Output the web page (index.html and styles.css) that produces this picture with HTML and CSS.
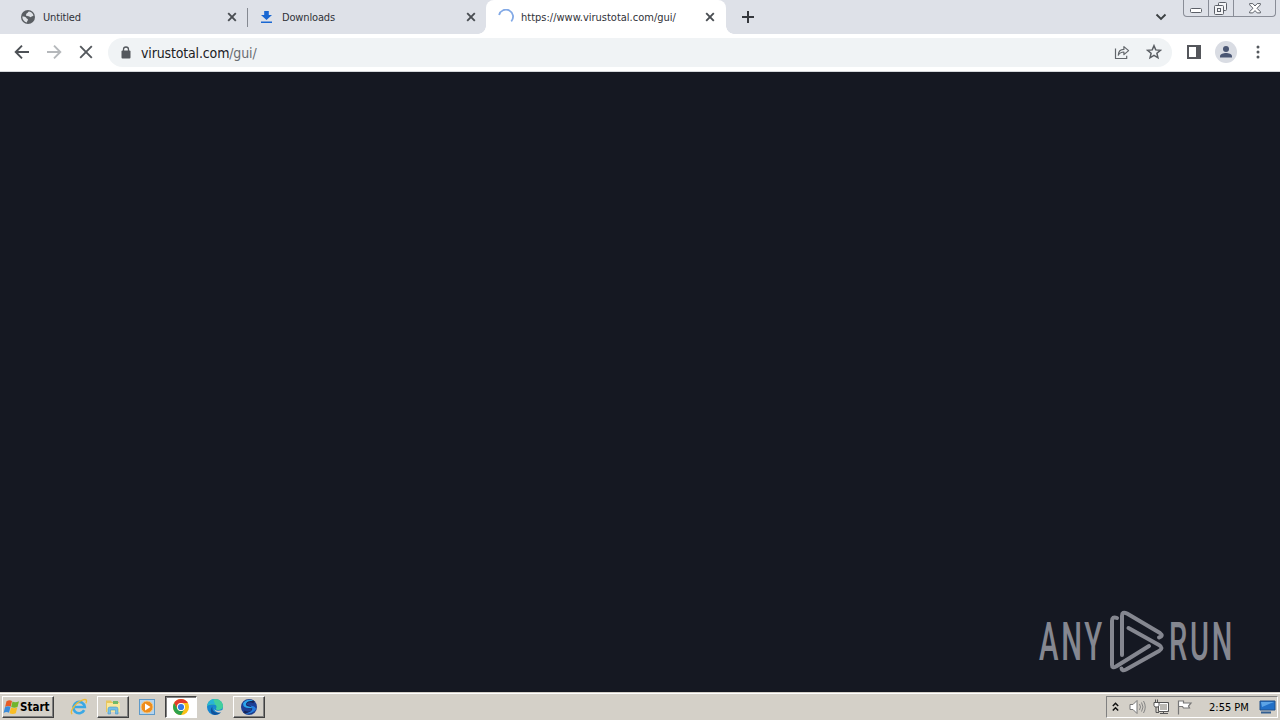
FILE: index.html
```html
<!DOCTYPE html>
<html lang="en">
<head>
	<meta charset="utf-8">
	<title>virustotal.com</title>
	<link rel="stylesheet" href="styles.css">
</head>
<body>
	<div class="tabs">
		<div class="tab first">
			<svg class="icon" width="16" height="16" viewBox="0 0 16 16"><circle cx="8" cy="8" r="7" fill="#5a5e63"/><path d="M2.300 7.400c1.600 0 3.600.1 4.100 1.500.2.900 1.500.7 1.600 1.700.1 1.100-1 1.200-1.100 2.900C4 12.800 2.200 10.300 2.300 7.400zM6.800 4.300c1-.1 1.100-1.600 2.300-1.800 2 .4 3.800 1.900 4.400 4-.8.900-1.700.5-2.200 1.300-.7.900-1.700 0-2.500-.5-.9-.4-2.200.2-2.600-.8-.3-1 .1-1.600.6-2.200z" fill="#dee1e6"/></svg>
			<span class="name untitled">Untitled</span>
			<svg class="close" width="10" height="10" viewBox="0 0 10 10"><path d="M1.200 1.200l7.600 7.600M8.800 1.200L1.200 8.800"/></svg>
		</div>
		<div class="tab second">
			<svg class="icon" width="16" height="16" viewBox="0 0 16 16"><path d="M5.200 2h4.600v4H13L7.500 11 2 6h3.200zM2 12.600h11V14H2z" fill="#1967d2"/></svg>
			<span class="name downloads">Downloads</span>
			<svg class="close" width="10" height="10" viewBox="0 0 10 10"><path d="M1.200 1.200l7.600 7.600M8.800 1.200L1.200 8.800"/></svg>
		</div>
		<div class="tab active">
			<svg class="icon" width="16" height="16" viewBox="0 0 16 16"><path d="M1.100 5.900a7.100 7.100 0 1 1 12.200 6.500" fill="none" stroke="#82a9e6" stroke-width="1.800"/></svg>
			<span class="name url">https://www.virustotal.com/gui/</span>
			<svg class="close" width="10" height="10" viewBox="0 0 10 10"><path d="M1.200 1.200l7.600 7.600M8.800 1.200L1.200 8.800"/></svg>
		</div>
		<svg class="plus" width="12" height="12" viewBox="0 0 12 12"><path d="M6 0v12M0 6h12" stroke="#35383d" stroke-width="2"/></svg>
		<svg class="down" width="12" height="8" viewBox="0 0 12 8"><path d="M1.500 1.500L6 6l4.500-4.500" fill="none" stroke="#3c4043" stroke-width="1.900"/></svg>
		<div class="win">
			<span class="min"><svg width="13" height="6" viewBox="0 0 13 6"><rect x=".5" y=".5" width="11" height="4" rx="1" fill="#fff" stroke="#5c6068"/></svg></span>
			<span class="max"><svg width="14" height="14" viewBox="0 0 14 14"><g fill="#f4f5f7" stroke="#5c6068"><rect x="4.500" y=".5" width="8" height="8" rx="1"/><rect x=".5" y="3.500" width="9" height="9" rx="1"/><rect x="3.500" y="6.500" width="3" height="3"/></g></svg></span>
			<span class="x"><svg width="12" height="11" viewBox="0 0 12 11"><path d="M.6.600h3.200L6 3l2.200-2.400h3.200v1.200L8 5.300l3.400 3.400v1.200H8.200L6 7.600 3.800 9.900H.6V8.700L4 5.300.6 1.800z" fill="#fff" stroke="#5c6068"/></svg></span>
		</div>
	</div>

	<div class="toolbar">
		<svg class="nav" width="32" height="32" viewBox="0 0 32 32"><path d="M23 16H10M16 9.700L9.700 16l6.300 6.300" stroke="#4d5156"/></svg>
		<svg class="nav" width="32" height="32" viewBox="0 0 32 32"><path d="M9 16h13M16 9.700l6.300 6.300-6.300 6.300" stroke="#b5b8bb"/></svg>
		<svg class="nav" width="32" height="32" viewBox="0 0 32 32"><path d="M10.200 10.200l11.600 11.600M21.800 10.200L10.200 21.800" stroke="#54585d"/></svg>
		<div class="address">
			<svg class="lock" width="10" height="13" viewBox="0 0 10 13"><path d="M2.500 5V3.500a2.500 2.500 0 0 1 5 0V5" fill="none" stroke="#54585d" stroke-width="1.300"/><rect x=".5" y="4.500" width="9" height="8" rx="1" fill="#54585d"/></svg>
			<span class="host">virustotal.com</span><span class="path">/gui/</span>
			<svg class="share" width="16" height="16" viewBox="0 0 16 16"><path d="M1.500 4.500v10h11.200v-2.700M4.300 11.200c.2-3.800 2.300-5.800 5.600-5.800V2.600l4.700 4-4.700 4V8c-2.700 0-4.400 1-5.600 3.200z" fill="none" stroke="#62666b" stroke-width="1.200" stroke-linejoin="round"/></svg>
			<svg class="star" width="16" height="16" viewBox="0 0 16 16"><path d="M8 1.700l1.750 4.200 4.650.4-3.500 3 1.050 4.500L8 11.400l-3.950 2.400 1.050-4.500-3.500-3 4.650-.4z" fill="none" stroke="#5a5e63" stroke-width="1.500"/></svg>
		</div>
		<svg class="panel" width="14" height="14" viewBox="0 0 14 14"><path d="M0 0h14v14H0zM2 2v10h7V2z" fill="#54565b" fill-rule="evenodd"/></svg>
		<svg class="user" width="22" height="22" viewBox="0 0 22 22"><circle cx="11" cy="11" r="11" fill="#d9dce3"/><circle cx="11" cy="8" r="3" fill="#4a5673"/><path d="M5 16.500v-1.300c0-2.200 3.500-3.200 6-3.200s6 1 6 3.200v1.300z" fill="#4a5673"/></svg>
		<svg class="more" width="4" height="14" viewBox="0 0 4 14"><g fill="#54585d"><circle cx="2" cy="2" r="1.500"/><circle cx="2" cy="7" r="1.500"/><circle cx="2" cy="12" r="1.500"/></g></svg>
	</div>

	<div class="page">
		<svg class="logo" width="210" height="70" viewBox="0 0 210 70">
			<text x="3" y="54" textLength="66" lengthAdjust="spacingAndGlyphs">ANY</text>
			<text x="133" y="54" textLength="66" lengthAdjust="spacingAndGlyphs">RUN</text>
			<path d="M81 12Q76 10 76 15v44q0 3.500 4 1.500L113 40M86 49V10q0-5 5-2.500L124 27q4 3 -1 4.500M92.500 22L123 39q5 3 0 6L90 63.500q-4 2-4.500-1"/>
		</svg>
	</div>

	<div class="taskbar">
		<div class="start">
			<svg width="18" height="17" viewBox="0 0 18 17"><path d="M3.500 2.200c2-1.200 4-1.200 5.500-.1L7.700 7.700C6 6.700 4.200 6.700 2.100 7.900z" fill="#e65b25"/><path d="M9.500 2.500c2 1 4 .9 6.500-.3l-1.500 5.800c-2 1-4.300 1-6.300 0z" fill="#72b52d"/><path d="M2 8.300c2-1.200 3.900-1.200 5.500-.2L6 13.700c-1.700-1-3.600-.9-5.400.2z" fill="#398bda"/><path d="M8 8.500c2 1 4.300 1 6.300 0l-1.500 5.800c-2 1.100-4.300 1-6.300 0z" fill="#f9bd24"/></svg>
			<span>Start</span>
		</div>
		<div class="task ie"><svg width="18" height="18" viewBox="0 0 18 18"><path d="M14.200 12.200a5.700 5.700 0 1 1 .6-3.200H5" fill="none" stroke="#3aa8e5" stroke-width="2.600"/><path d="M2.200 16.200C-1.300 14 5.800 4.200 13 1.800c3.500-1.100 4.200.5 3 3.500" fill="none" stroke="#eebb35" stroke-width="1.400"/></svg></div>
		<div class="task raised"><svg width="18" height="18" viewBox="0 0 18 18"><path d="M2 2.500h5l1 1.500h7v10H2z" fill="#e8c65c"/><path d="M3 5h13v9H3z" fill="#f9e89d"/><path d="M9 3h5v3H9z" fill="#71b969"/><path d="M4 16v-5q0-2 2-2h6q2 0 2 2v5h-2.500v-4h-5v4z" fill="#76bfe6" stroke="#4c99c8" stroke-width=".6"/></svg></div>
		<div class="task media"><svg width="18" height="18" viewBox="0 0 18 18"><rect x="1.500" y="1.500" width="15" height="15" fill="#b4d4ef" stroke="#5e9ac9"/><circle cx="9" cy="9" r="6" fill="#ee8d1c" stroke="#f9c77b"/><path d="M7 5.500v7l5.500-3.500z" fill="#fff"/></svg></div>
		<div class="task pressed"><svg width="18" height="18" viewBox="0 0 18 18"><circle cx="9" cy="9" r="8" fill="#fbc116"/><path d="M2.100 5A8 8 0 0 1 15.900 5H9a4 4 0 0 0-3.500 6z" fill="#e33b2e"/><path d="M2.100 5A8 8 0 0 0 9 17l3.500-6a4 4 0 0 1-7 0z" fill="#2da24c"/><circle cx="9" cy="9" r="4" fill="#fff"/><circle cx="9" cy="9" r="3.100" fill="#3478e5"/></svg></div>
		<div class="task edge"><svg width="18" height="18" viewBox="0 0 18 18"><circle cx="9" cy="9" r="8" fill="#1786d0"/><path d="M1.200 8C2 3.500 5 1 9 1c5 0 8 3.500 8 7 0 3-2.500 4-5 4-2 0-2.500-1-1.700-2 .8-1.300 0-3.500-2.600-3.500C5 6.500 2.500 6.500 1.200 8z" fill="#42cf9d"/><path d="M1.200 8C2 3.500 5 1 9 1 6 2 9 4 9 6.500 6 5.500 3 6 1.200 8z" fill="#28b4d6"/><path d="M6.500 8.500c-1.200 4 2.500 7.500 8.500 5.700A8 8 0 0 1 9 17c-4.500-.5-5.500-5.500-2.500-8.500z" fill="#11529c"/><path d="M8 9c-.7 3 3.500 5 8.500 3l1.500-1v5l-3-1.500c-4 .5-7-1-7-5.500z" fill="#d4d0c8"/></svg></div>
		<div class="task raised"><svg width="18" height="18" viewBox="0 0 18 18"><circle cx="9" cy="9" r="8" fill="#1d3f95"/><path d="M14 4.200C11 2 5 3 5 6.300 5 10 13 8 13 11.800c0 3-5.500 3.700-9 1.800" fill="none" stroke="#172558" stroke-width="2.500"/><path d="M3 5.500C5 1.500 10 .5 13.500 3 9 2.500 5.500 4 6 7c.5 1.500 5 1.500 7 3-3 .5-8 0-9.500-2z" fill="#2ba6ee"/><path d="M5 15.500c4 1 9-.5 11-4.500-.5-3-4-3-6-3.500 5 3.500 1 7-5 8z" fill="#257de0"/></svg></div>
		<div class="tray">
			<svg class="up" width="7" height="10" viewBox="0 0 7 10"><path d="M.8 4L3.500 1.300 6.200 4M.8 8.500l2.700-2.700 2.700 2.700" fill="none" stroke="#111" stroke-width="1.500"/></svg>
			<svg class="sound" width="17" height="16" viewBox="0 0 17 16"><path d="M1 5.500h3l4-4v13l-4-4H1z" fill="#fff" stroke="#777"/><path d="M10.500 5q2 3 0 6M12.500 3.500q3 4.500 0 9M14.500 2q3.500 6 0 12" fill="none" stroke="#858585"/></svg>
			<svg class="net" width="17" height="16" viewBox="0 0 17 16"><path d="M5.500 3.500h10v9h-10z" fill="#bbb9b4" stroke="#555"/><path d="M6.500 4.500h8v7h-8z" fill="none" stroke="#fff"/><path d="M7 14.500h8M10.500 13v2M3 7v6.500h3" fill="none" stroke="#555"/><path d="M1 3.500h5v3l-1 1.500H2L1 6.500zM2.500.5V4M4.500.5V4" fill="#fff" stroke="#555"/></svg>
			<svg class="flag" width="17" height="16" viewBox="0 0 17 16"><path d="M2.500 15.500v-14M2.500 2h5v2h7.500l-2.500 3 1 2h-6l-1-1.500h-4z" fill="#fff" stroke="#777" stroke-width="1.200"/></svg>
			<span class="time">2:55 PM</span>
			<svg class="screen" width="17" height="14" viewBox="0 0 17 14"><path d="M1 1h15v9H1z" fill="#2270c7" stroke="#20518a"/><path d="M2 2h13L3 7z" fill="#5ca4e6"/><path d="M2 12.500h10" stroke="#335f91" stroke-width="2"/></svg>
		</div>
	</div>
</body>
</html>
```

FILE: styles.css
```css
*{
	box-sizing: border-box;
}
body{
	margin: 0;
	width: 1280px;
	height: 720px;
	overflow: hidden;
	display: flex;
	flex-direction: column;
	font-family: "DejaVu Sans Condensed", "DejaVu Sans", sans-serif;
	font-stretch: condensed;
	font-size: 11px;
	color: #303238;
}
svg{
	display: block;
	flex: none;
}
.tabs{
	height: 34px;
	flex: none;
	display: flex;
	padding-left: 8px;
	background-color: #dee1e8;
}
.tab{
	width: 239px;
	height: 34px;
	display: flex;
	align-items: center;
	padding: 0 10px 0 12px;
	position: relative;
}
.tab.first{
	width: 240px;
}
.tab.second{
	padding: 0 11px;
}
.first::after{
	content: "";
	position: absolute;
	right: 0;
	top: 8px;
	width: 1px;
	height: 19px;
	background-color: #858991;
}
.first .close{
	margin-right: 1px;
}
.tab.active{
	width: 240px;
	margin-left: -1px;
	background-color: #fff;
	border-radius: 8px 8px 0 0;
}
.active::before,
.active::after{
	content: "";
	position: absolute;
	bottom: 0;
	width: 8px;
	height: 8px;
}
.active::before{
	left: -8px;
	background: radial-gradient(circle at 0 0, transparent 7.5px, #fff 8px);
}
.active::after{
	right: -8px;
	background: radial-gradient(circle at 100% 0, transparent 7.5px, #fff 8px);
}
.active .close{
	margin-right: 1px;
}
.name{
	flex: 1;
	margin-left: 7px;
	white-space: nowrap;
}
.untitled,
.downloads{
	letter-spacing: -0.15px;
}
.close path{
	stroke: #494d52;
	stroke-width: 1.9;
}
.plus{
	margin: 11px 0 0 16px;
}
.down{
	margin: 13px 16px 0 auto;
}
.win{
	width: 93px;
	height: 17px;
	margin-right: 4px;
	display: flex;
	border: 1px solid #898d97;
	border-top: 0;
	border-radius: 0 0 4px 4px;
}
.win span{
	display: flex;
	justify-content: center;
}
.min{
	width: 25px;
	padding-top: 8px;
	border-right: 1px solid #898d97;
}
.max{
	width: 25px;
	padding-top: 2px;
	border-right: 1px solid #898d97;
}
.x{
	width: 41px;
	padding-top: 3px;
}
.toolbar{
	height: 38px;
	flex: none;
	display: flex;
	align-items: center;
	padding: 0 20px 1px 6px;
	background-color: #fff;
	border-bottom: 1px solid #d5d7db;
}
.nav path{
	fill: none;
	stroke-width: 1.9;
}
.address{
	width: 1064px;
	height: 29px;
	margin-left: 6px;
	display: flex;
	align-items: center;
	padding: 0 10px 0 13px;
	border-radius: 15px;
	background-color: #f0f3f5;
	font-size: 14px;
	letter-spacing: -0.15px;
}
.host{
	margin-left: 10px;
	padding-top: 1px;
	color: #202124;
}
.path{
	padding-top: 1px;
	color: #696d72;
}
.share{
	margin-left: auto;
}
.star{
	margin-left: 16px;
}
.panel{
	margin-left: 15px;
}
.user{
	margin-left: 14px;
}
.more{
	margin-left: 19px;
}
.page{
	flex: 1;
	display: flex;
	justify-content: flex-end;
	align-items: flex-end;
	padding: 0 34px 16px 0;
	background-color: #151822;
}
.logo text{
	font-family: "Roboto", "Liberation Sans", sans-serif;
	font-stretch: normal;
	font-size: 53px;
	font-weight: 500;
	letter-spacing: 5px;
	fill: #858790;
}
.logo path{
	fill: none;
	stroke: #858790;
	stroke-width: 4;
	stroke-linecap: round;
	stroke-linejoin: round;
}
.taskbar{
	height: 28px;
	flex: none;
	display: flex;
	align-items: center;
	padding: 2px 2px 0;
	background-color: #d4d0c8;
	box-shadow: inset 0 1px #d4d0c8, inset 0 2px #fff;
}
.start{
	width: 52px;
	height: 22px;
	margin-right: 9px;
	display: flex;
	align-items: center;
	font-weight: bold;
	font-size: 11.5px;
	color: #000;
}
.start span{
	margin-left: -1px;
}
.start,
.raised{
	border: 1px solid;
	border-color: #fff #404040 #404040 #fff;
	box-shadow: inset -1px -1px #808080;
}
.task{
	width: 32px;
	height: 22px;
	margin-right: 2px;
	display: flex;
	align-items: center;
	justify-content: center;
}
.pressed{
	background-color: #fff;
	border: 1px solid;
	border-color: #404040 #fff #fff #404040;
	box-shadow: inset 1px 1px #808080;
}
.tray{
	width: 172px;
	height: 22px;
	margin-left: auto;
	display: flex;
	align-items: center;
	padding: 0 1px 0 5px;
	border: 1px solid;
	border-color: #808080 #fff #fff #808080;
	color: #000;
}
.sound{
	margin-left: 10px;
}
.net{
	margin-left: 7px;
}
.flag{
	margin-left: 6px;
}
.time{
	margin-left: 16px;
	white-space: nowrap;
}
.screen{
	margin-left: auto;
}
```
